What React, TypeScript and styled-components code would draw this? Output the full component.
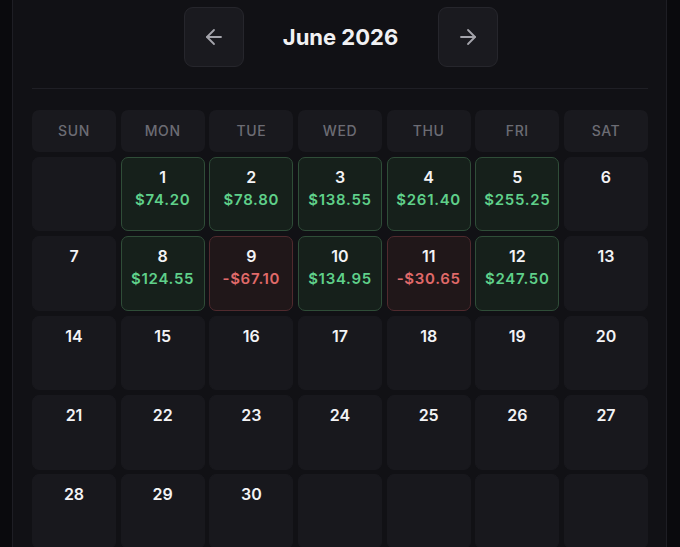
import React from "react";
import styled, { createGlobalStyle } from "styled-components";

const Global = createGlobalStyle`
  html, body { margin: 0; padding: 0; background: #0a0a0d; }
  body { font-family: Inter, "Noto Sans", sans-serif; color: #f2f2f4; }
`;

const Page = styled.div`
  width: 680px;
  height: 547px;
  overflow: hidden;
  background: #0a0a0d;
  padding: 0 13px 0 12px;
  box-sizing: border-box;
`;

const Panel = styled.div`
  background: #111115;
  border-left: 1px solid #1e1e24;
  border-right: 1px solid #1e1e24;
  padding: 7px 18px 40px 19px;
  height: 100%;
  box-sizing: border-box;
`;

const Header = styled.div`
  display: flex;
  align-items: center;
  justify-content: center;
  padding-left: 1px;
`;

const NavButton = styled.button`
  width: 60px;
  height: 60px;
  border-radius: 9px;
  background: #1a1a1f;
  border: 1px solid #26262c;
  color: #a4a4ab;
  display: flex;
  align-items: center;
  justify-content: center;
  padding: 0;
  cursor: pointer;
`;

const Title = styled.h2`
  width: 194px;
  margin: 0;
  text-align: center;
  font-size: 22px;
  font-weight: 700;
  color: #f1f1f3;
  letter-spacing: 0px;
`;

const Divider = styled.div`
  height: 1px;
  background: #1f1f25;
  margin: 21px 0 21px;
`;

const Grid = styled.div`
  display: grid;
  grid-template-columns: repeat(7, 1fr);
  column-gap: 4.67px;
  row-gap: 4.67px;
`;

const WeekdayCell = styled.div`
  height: 42px;
  border-radius: 7px;
  background: #19191e;
  color: #6c6c74;
  font-size: 14px;
  font-weight: 500;
  letter-spacing: 0.6px;
  display: flex;
  align-items: center;
  justify-content: center;
  padding-bottom: 2px;
  box-sizing: border-box;
`;

type Tone = "none" | "gain" | "loss";

const DayCell = styled.div<{ $tone: Tone }>`
  height: 74.8px;
  box-sizing: border-box;
  border-radius: 7px;
  display: flex;
  flex-direction: column;
  align-items: center;
  padding-top: 9px;
  background: ${(p) =>
    p.$tone === "gain" ? "#16201b" : p.$tone === "loss" ? "#201719" : "#18181d"};
  border: 1px solid
    ${(p) =>
      p.$tone === "gain" ? "#2f4d38" : p.$tone === "loss" ? "#502a2e" : "#18181d"};
`;

const DayNum = styled.div`
  font-size: 16px;
  font-weight: 600;
  color: #f3f3f5;
  line-height: 20px;
`;

const Amount = styled.div<{ $loss: boolean }>`
  margin-top: 4px;
  font-size: 15px;
  font-weight: 600;
  letter-spacing: 0.7px;
  line-height: 18px;
  color: ${(p) => (p.$loss ? "#e06a6a" : "#5fd08a")};
`;

const Arrow = ({ dir }: { dir: "left" | "right" }) => (
  <svg width="24" height="24" viewBox="0 0 24 24" fill="none" stroke="currentColor" strokeWidth="1.8" strokeLinecap="round" strokeLinejoin="round">
    {dir === "left" ? (
      <>
        <path d="M19 12H5" />
        <path d="M12 19l-7-7 7-7" />
      </>
    ) : (
      <>
        <path d="M5 12h14" />
        <path d="M12 5l7 7-7 7" />
      </>
    )}
  </svg>
);

const weekdays = ["SUN", "MON", "TUE", "WED", "THU", "FRI", "SAT"];

const pnl: Record<number, number> = {
  1: 74.2,
  2: 78.8,
  3: 138.55,
  4: 261.4,
  5: 255.25,
  8: 124.55,
  9: -67.1,
  10: 134.95,
  11: -30.65,
  12: 247.5,
};

const fmt = (v: number) => (v < 0 ? `-$${Math.abs(v).toFixed(2)}` : `$${v.toFixed(2)}`);

export default function App() {
  const cells: (number | null)[] = [null];
  for (let d = 1; d <= 30; d++) cells.push(d);
  while (cells.length < 35) cells.push(null);

  return (
    <>
      <Global />
      <Page>
        <Panel>
          <Header>
            <NavButton aria-label="Previous month">
              <Arrow dir="left" />
            </NavButton>
            <Title>June 2026</Title>
            <NavButton aria-label="Next month">
              <Arrow dir="right" />
            </NavButton>
          </Header>
          <Divider />
          <Grid>
            {weekdays.map((w) => (
              <WeekdayCell key={w}>{w}</WeekdayCell>
            ))}
            {cells.map((d, i) => {
              const v = d != null ? pnl[d] : undefined;
              const tone: Tone = v === undefined ? "none" : v < 0 ? "loss" : "gain";
              return (
                <DayCell key={i} $tone={tone}>
                  {d != null && <DayNum>{d}</DayNum>}
                  {v !== undefined && <Amount $loss={v < 0}>{fmt(v)}</Amount>}
                </DayCell>
              );
            })}
          </Grid>
        </Panel>
      </Page>
    </>
  );
}
